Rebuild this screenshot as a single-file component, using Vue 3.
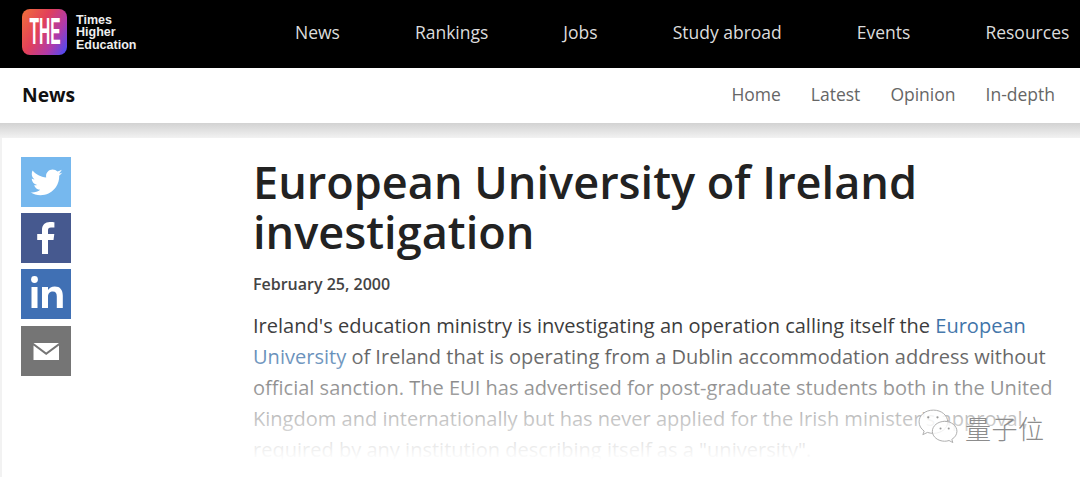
<script setup>
const navItems = ['News', 'Rankings', 'Jobs', 'Study abroad', 'Events', 'Resources']
const subItems = ['Home', 'Latest', 'Opinion', 'In-depth']
</script>

<template>
  <div class="page">
    <header class="top">
      <div class="brand">
        <div class="logo"><span class="logo-text">THE</span></div>
        <div class="brand-text">Times<br />Higher<br />Education</div>
      </div>
      <nav class="nav">
        <span v-for="n in navItems" :key="n">{{ n }}</span>
      </nav>
    </header>
    <div class="sub">
      <strong class="sub-title">News</strong>
      <nav class="sub-nav">
        <span v-for="n in subItems" :key="n">{{ n }}</span>
      </nav>
    </div>
    <main class="main">
      <aside class="share">
        <div class="btn tw">
          <svg viewBox="0 0 24 24" width="35" height="35"><path fill="#fff" d="M23 5.100c-.8.4-1.700.6-2.600.7.900-.6 1.700-1.400 2-2.500-.9.500-1.900.9-2.900 1.100C18.700 3.500 17.500 3 16.200 3c-2.500 0-4.500 2-4.500 4.500 0 .4 0 .7.100 1C8 8.300 4.700 6.500 2.500 3.800c-.4.700-.6 1.400-.6 2.300 0 1.600.8 2.900 2 3.700-.7 0-1.400-.2-2-.6v.1c0 2.200 1.600 4 3.600 4.400-.4.100-.8.200-1.200.2-.3 0-.6 0-.8-.1.600 1.800 2.200 3.100 4.200 3.100-1.500 1.200-3.500 1.900-5.600 1.900-.4 0-.7 0-1.100-.1 2 1.300 4.400 2 6.900 2 8.300 0 12.800-6.900 12.800-12.800v-.6c.9-.6 1.700-1.400 2.300-2.300z"/></svg>
        </div>
        <div class="btn fb">
          <svg viewBox="0 0 50 50" width="50" height="50"><path fill="#fff" d="M27 41V27h5.500l.8-6H27v-3.600c0-1.800.6-2.900 3-2.900h3.400V9.300c-.7-.1-2.500-.3-4.600-.3-4.600 0-7.800 2.800-7.800 7.900V21h-4.800v6H21v14z"/></svg>
        </div>
        <div class="btn li">
          <svg viewBox="0 0 50 50" width="50" height="50"><circle cx="13.500" cy="10.500" r="3.400" fill="#fff"/><path fill="#fff" d="M10.500 18h6v21h-6zM21 18h6v3c1.200-2 3.500-3.600 6.800-3.600 5.300 0 8 3.300 8 9.300V39h-6V27.500c0-3.200-1.200-5-3.900-5-2.800 0-4.900 1.900-4.900 5V39h-6z"/></svg>
        </div>
        <div class="btn em">
          <svg viewBox="0 0 50 50" width="50" height="50"><path fill="#fff" d="M12.500 17h25.500L25.200 26.500zM12.500 19.500l12.700 9.500 12.800-9.500V34h-25.500z"/></svg>
        </div>
      </aside>
      <article class="article">
        <h1>European University of Ireland investigation</h1>
        <div class="date">February 25, 2000</div>
        <p>Ireland's education ministry is investigating an operation calling itself the <a>European University</a> of Ireland that is operating from a Dublin accommodation address without official sanction. The EUI has advertised for post-graduate students both in the United Kingdom and internationally but has never applied for the Irish minister's approval, required by any institution describing itself as a "university".</p>
      </article>
      <div class="fade"></div>
      <div class="mark">
        <svg viewBox="0 0 42 36" width="43" height="37" fill="rgba(255,255,255,0.8)" stroke="#a8a8a8" stroke-width="0.900"><path d="M16 1C8 1 2 6 2 12.500c0 3.700 2 6.800 5 9l-1.300 3.500 4.500-2.200c1.800.6 3.800.9 5.800.9 8 0 14-5 14-11.200S24 1 16 1z"/><path d="M27 12c-6.500 0-12 4.300-12 9.700s5.500 9.700 12 9.700c1.500 0 3-.2 4.300-.7l3.700 2-1-3.100c3-1.800 5-4.700 5-7.900C39 16.300 33.500 12 27 12z"/><g fill="#999" stroke="none"><circle cx="11" cy="8" r="1.100"/><circle cx="20" cy="8" r="1.100"/><circle cx="23" cy="19" r="1"/><circle cx="31" cy="19" r="1"/></g></svg>
        <span class="mark-text">量子位</span>
      </div>
    </main>
  </div>
</template>

<style scoped>
.page {
  width: 1080px;
  height: 477px;
  overflow: hidden;
  position: relative;
  background: #fff;
  font-family: "Open Sans", "Noto Sans", sans-serif;
  color: #222;
}
.top {
  height: 67.500px;
  box-sizing: border-box;
  padding-bottom: 3px;
  background: #000;
  display: flex;
  align-items: center;
  color: #dcdcdc;
}
.brand {
  display: flex;
  align-items: center;
  gap: 9px;
  margin-left: 22px;
  width: 273px;
  flex: none;
}
.logo {
  width: 45px;
  height: 46px;
  border-radius: 8px;
  background: linear-gradient(120deg, #f0703a 0%, #e2405a 40%, #b23aa8 70%, #3f4dff 100%);
  display: flex;
  align-items: center;
  justify-content: center;
  overflow: hidden;
}
.logo-text {
  display: inline-block;
  color: #fff;
  font-family: "Liberation Sans", sans-serif;
  font-weight: 700;
  font-size: 37px;
  line-height: 46px;
  transform: scaleX(0.42);
}
.brand-text {
  font-family: "Liberation Sans", sans-serif;
  font-size: 12.500px;
  font-weight: 700;
  line-height: 12.500px;
  color: #eee;
}
.nav {
  display: flex;
  gap: 75px;
  font-size: 17.500px;
  white-space: nowrap;
}
.sub {
  height: 55.500px;
  box-sizing: border-box;
  padding: 0 25px 2px 22px;
  display: flex;
  align-items: center;
  justify-content: space-between;
  position: relative;
  z-index: 1;
}
.sub-title {
  font-size: 19.300px;
  font-weight: 700;
  color: #111;
}
.sub-nav {
  display: flex;
  gap: 30px;
  font-size: 17.500px;
  color: #666;
}
.main {
  position: relative;
  display: flex;
  height: 354px;
  background: linear-gradient(#d2d2d2 0, #f2f2f2 15px);
  padding: 34px 0 0 21px;
  box-sizing: border-box;
}
.main::before {
  content: "";
  position: absolute;
  left: 2px;
  right: 0;
  top: 15px;
  bottom: 0;
  background: #fff;
}
.share {
  position: relative;
  display: flex;
  flex-direction: column;
  gap: 6.200px;
  width: 50px;
  flex: none;
}
.btn {
  width: 50px;
  height: 50px;
  display: flex;
  align-items: center;
  justify-content: center;
}
.tw { background: #76b8ee; }
.fb { background: #46598f; }
.li { background: #4070b4; }
.em { background: #757575; }
.article {
  position: relative;
  margin-left: 182px;
  width: 810px;
}
h1 {
  margin: 0;
  font-size: 45.100px;
  line-height: 50px;
  font-weight: 600;
  color: #222;
}
.date {
  margin-top: 16px;
  font-size: 16px;
  line-height: 22px;
  font-weight: 600;
  color: #444;
}
p {
  margin: 15px 0 0;
  font-size: 20.050px;
  line-height: 31px;
  color: #3a3a3a;
  width: 805px;
}
a { color: #3d72a8; }
.fade {
  position: absolute;
  left: 240px;
  right: 0;
  top: 202px;
  bottom: 0;
  background: linear-gradient(rgba(255,255,255,0), #fff 135px);
}
.mark {
  position: absolute;
  left: 917px;
  top: 286px;
  display: flex;
  align-items: center;
  gap: 5px;
  font-family: "Noto Sans CJK SC", sans-serif;
  color: #8c8c8c;
}
.mark-text {
  font-size: 26px;
  font-weight: 300;
  letter-spacing: 0.500px;
}
</style>
